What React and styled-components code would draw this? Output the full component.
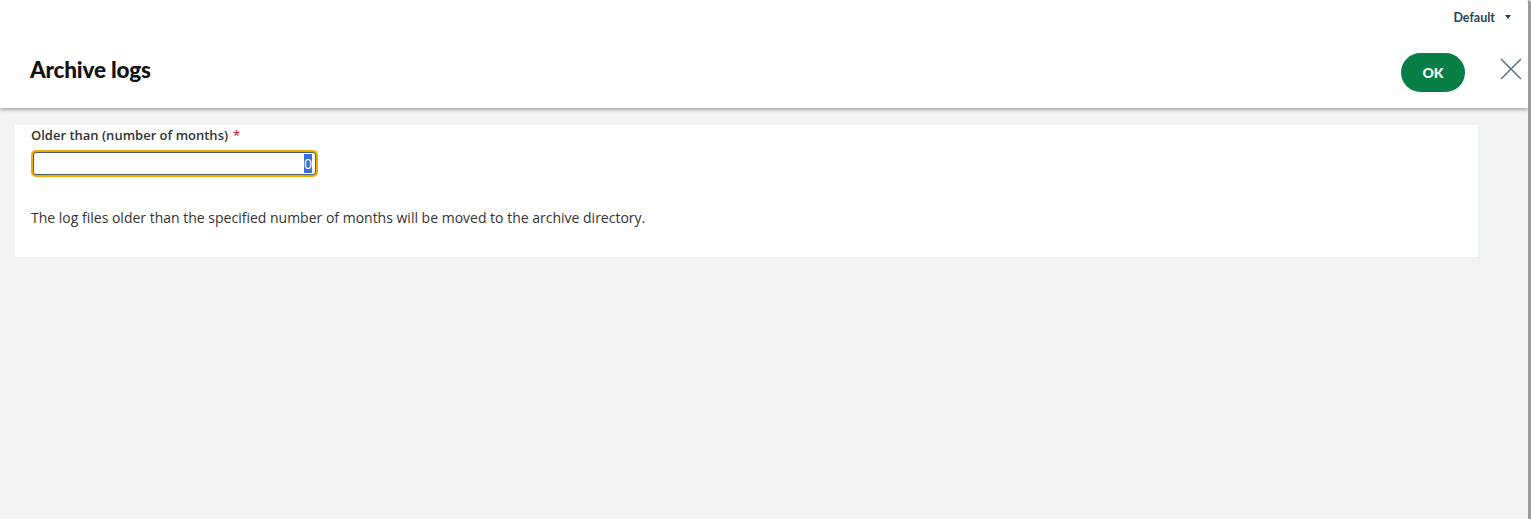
import React, { useEffect, useRef } from "react";
import styled, { createGlobalStyle } from "styled-components";

const Global = createGlobalStyle`
  html, body { margin: 0; padding: 0; height: 100%; }
  body { background: #f0f3f4; font-family: "Open Sans", "Liberation Sans", sans-serif; }
  #root { height: 100%; }
`;

const Page = styled.div`
  height: 519px;
  display: flex;
  flex-direction: column;
  background: #f0f3f4;
  border-right: 3px solid #9b9c9d;
  border-top-right-radius: 4px;
  box-sizing: border-box;
  overflow: hidden;
`;

const Header = styled.header`
  background: #fff;
  height: 108px;
  display: flex;
  flex-direction: column;
  box-shadow: 0 2px 3px rgba(0, 0, 0, 0.3);
  position: relative;
  z-index: 1;
`;

const TopBar = styled.div`
  height: 34px;
  display: flex;
  justify-content: flex-end;
  align-items: center;
  padding-right: 17px;
`;

const ProfileMenu = styled.button`
  border: none;
  background: none;
  padding: 0;
  display: flex;
  align-items: center;
  gap: 10px;
  font-family: "Lato", "Liberation Sans", sans-serif;
  font-weight: 700;
  font-size: 12.5px;
  color: #27445a;
  cursor: pointer;
`;

const Caret = styled.span`
  width: 0;
  height: 0;
  border-left: 3.5px solid transparent;
  border-right: 3.5px solid transparent;
  border-top: 4px solid #27445a;
`;

const TitleRow = styled.div`
  flex: 1;
  display: flex;
  align-items: center;
  padding: 0 6px 0 30px;
`;

const Title = styled.h1`
  margin: 0 0 4px;
  flex: 1;
  font-family: "Lato", "Liberation Sans", sans-serif;
  font-weight: 900;
  font-size: 22.5px;
  letter-spacing: -0.2px;
  color: #111;
`;

const OkButton = styled.button`
  width: 64px;
  height: 39px;
  border: none;
  border-radius: 20px;
  background: #087e47;
  color: #fff;
  font-family: "Lato", "Liberation Sans", sans-serif;
  font-weight: 900;
  font-size: 14px;
  cursor: pointer;
  margin: 2px 35px 0 0;
`;

const CloseButton = styled.button`
  width: 22px;
  height: 22px;
  padding: 0;
  margin-bottom: 4px;
  border: none;
  background: none;
  display: flex;
  cursor: pointer;
`;

const Body = styled.main`
  flex: 1;
  padding: 17px 50px 0 15px;
`;

const Card = styled.section`
  background: #fff;
  padding: 0 16px;
  height: 132px;
  display: flex;
  flex-direction: column;
`;

const Label = styled.label`
  display: block;
  margin-top: 1px;
  font-family: "Open Sans", "Liberation Sans", sans-serif;
  font-weight: 600;
  font-size: 13px;
  line-height: 18px;
  color: #333;
`;

const Required = styled.span`
  color: #d0323e;
  margin-left: 5px;
`;

const NumberInput = styled.input`
  margin: 8px 0 0 2px;
  width: 283px;
  height: 23px;
  box-sizing: border-box;
  border: 1px solid #4b6070;
  border-radius: 3px;
  box-shadow: 0 0 0 2px #f2a900;
  outline: none;
  text-align: right;
  padding: 0 3px;
  font-family: "Open Sans", "Liberation Sans", sans-serif;
  font-size: 14px;
  color: #fff;
  background: #fff;
  &::selection { background: #3a6fd8; color: #fff; }
`;

const Help = styled.p`
  margin: 33px 0 0;
  font-family: "Open Sans", "Liberation Sans", sans-serif;
  font-size: 14px;
  color: #333;
`;

export default function App() {
  const ref = useRef(null);
  useEffect(() => {
    if (ref.current) {
      ref.current.focus();
      ref.current.select();
    }
  }, []);
  return (
    <>
      <Global />
      <Page>
        <Header>
          <TopBar>
            <ProfileMenu>
              Default <Caret />
            </ProfileMenu>
          </TopBar>
          <TitleRow>
            <Title>Archive logs</Title>
            <OkButton>OK</OkButton>
            <CloseButton aria-label="Close">
              <svg width="22" height="22" viewBox="0 0 22 22">
                <path d="M1 1 L21 21 M21 1 L1 21" stroke="#5b7787" strokeWidth="1.6" fill="none" />
              </svg>
            </CloseButton>
          </TitleRow>
        </Header>
        <Body>
          <Card>
            <Label htmlFor="months">
              Older than (number of months)<Required>*</Required>
            </Label>
            <NumberInput id="months" ref={ref} defaultValue="0" />
            <Help>
              The log files older than the specified number of months will be moved to the archive directory.
            </Help>
          </Card>
        </Body>
      </Page>
    </>
  );
}
